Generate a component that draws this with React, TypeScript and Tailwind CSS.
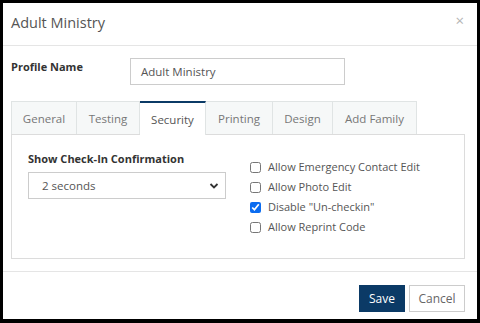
import React from "react";

const tabs = [
  { name: "General", w: "w-[66px]" },
  { name: "Testing", w: "w-[63px]" },
  { name: "Security", w: "w-[66px]", active: true },
  { name: "Printing", w: "w-[67px]" },
  { name: "Design", w: "w-[60px]" },
  { name: "Add Family", w: "w-[84px]" },
];

const checks = [
  { label: "Allow Emergency Contact Edit", checked: false },
  { label: "Allow Photo Edit", checked: false },
  { label: 'Disable "Un-checkin"', checked: true },
  { label: "Allow Reprint Code", checked: false },
];

export default function App() {
  return (
    <div
      className="w-[480px] h-[323px] bg-black pt-[3px] pl-[3px]"
      style={{ fontFamily: '"Open Sans", "Noto Sans", sans-serif' }}
    >
      <div className="w-[474px] h-[316px] bg-white flex flex-col">
        {/* header */}
        <div className="h-[43px] border-b border-[#e5e5e5] flex items-center justify-between pl-[8px] pr-[13px] shrink-0">
          <span className="text-[14.5px] text-[#555] pb-[3px]">Adult Ministry</span>
          <span className="text-[15px] text-[#b5b5b5] leading-none pb-[8px]">×</span>
        </div>

        {/* body */}
        <div className="pl-[8px] pr-[12px] pt-[12px] flex flex-col shrink-0">
          <div className="flex items-start h-[27px]">
            <div className="w-[119px] text-[11px] font-bold text-[#333] pt-[1px]">Profile Name</div>
            <div className="w-[215px] h-[27px] border border-[#ccc] flex items-center px-[10px] text-[11.5px] text-[#555]">
              Adult Ministry
            </div>
          </div>

          <div className="flex mt-[16px] h-[33px]">
            {tabs.map((t) =>
              t.active ? (
                <div
                  key={t.name}
                  className={`${t.w} h-[34px] bg-white border-t-2 border-t-[#0b3a66] border-r border-r-[#e0e4e4] flex items-center justify-center text-[11.5px] text-[#555] relative z-10 pt-[1px]`}
                >
                  {t.name}
                </div>
              ) : (
                <div
                  key={t.name}
                  className={`${t.w} h-[33px] bg-[#f6f8f8] border-t border-r border-[#e0e4e4] first:border-l flex items-center justify-center text-[11.5px] text-[#777] pt-[1px]`}
                >
                  {t.name}
                </div>
              )
            )}
          </div>

          <div className="h-[125px] border border-[#dcdcdc] flex pl-[16px] pt-[16px]">
            <div className="w-[222px] flex flex-col">
              <div className="text-[11px] font-bold text-[#333] leading-[16px]">Show Check-In Confirmation</div>
              <div className="mt-[5px] w-[198px] h-[27px] border border-[#ccc] flex items-center justify-between pl-[13px] pr-[6px] text-[11.5px] text-[#555]">
                <span>2 seconds</span>
                <svg width="10" height="8" viewBox="0 0 10 8">
                  <path d="M1.5 2 L5 5.5 L8.5 2" fill="none" stroke="#333" strokeWidth="1.8" />
                </svg>
              </div>
            </div>
            <div className="flex flex-col mt-[6px]">
              {checks.map((c) => (
                <label key={c.label} className="flex items-center h-[20px] text-[11px] text-[#555]">
                  <input
                    type="checkbox"
                    defaultChecked={c.checked}
                    className="w-[11px] h-[11px] m-0 mr-[7px] accent-[#0b6cf0]"
                  />
                  {c.label}
                </label>
              ))}
            </div>
          </div>
        </div>

        {/* footer */}
        <div className="mt-[12px] border-t border-[#e5e5e5] flex justify-end gap-[4px] pr-[12px] pt-[13px]">
          <button className="w-[46px] h-[27px] bg-[#0b3a66] text-white text-[12px] border border-[#0b3a66]">Save</button>
          <button className="w-[56px] h-[27px] bg-white text-[#666] text-[12px] border border-[#ccc]">Cancel</button>
        </div>
      </div>
    </div>
  );
}
